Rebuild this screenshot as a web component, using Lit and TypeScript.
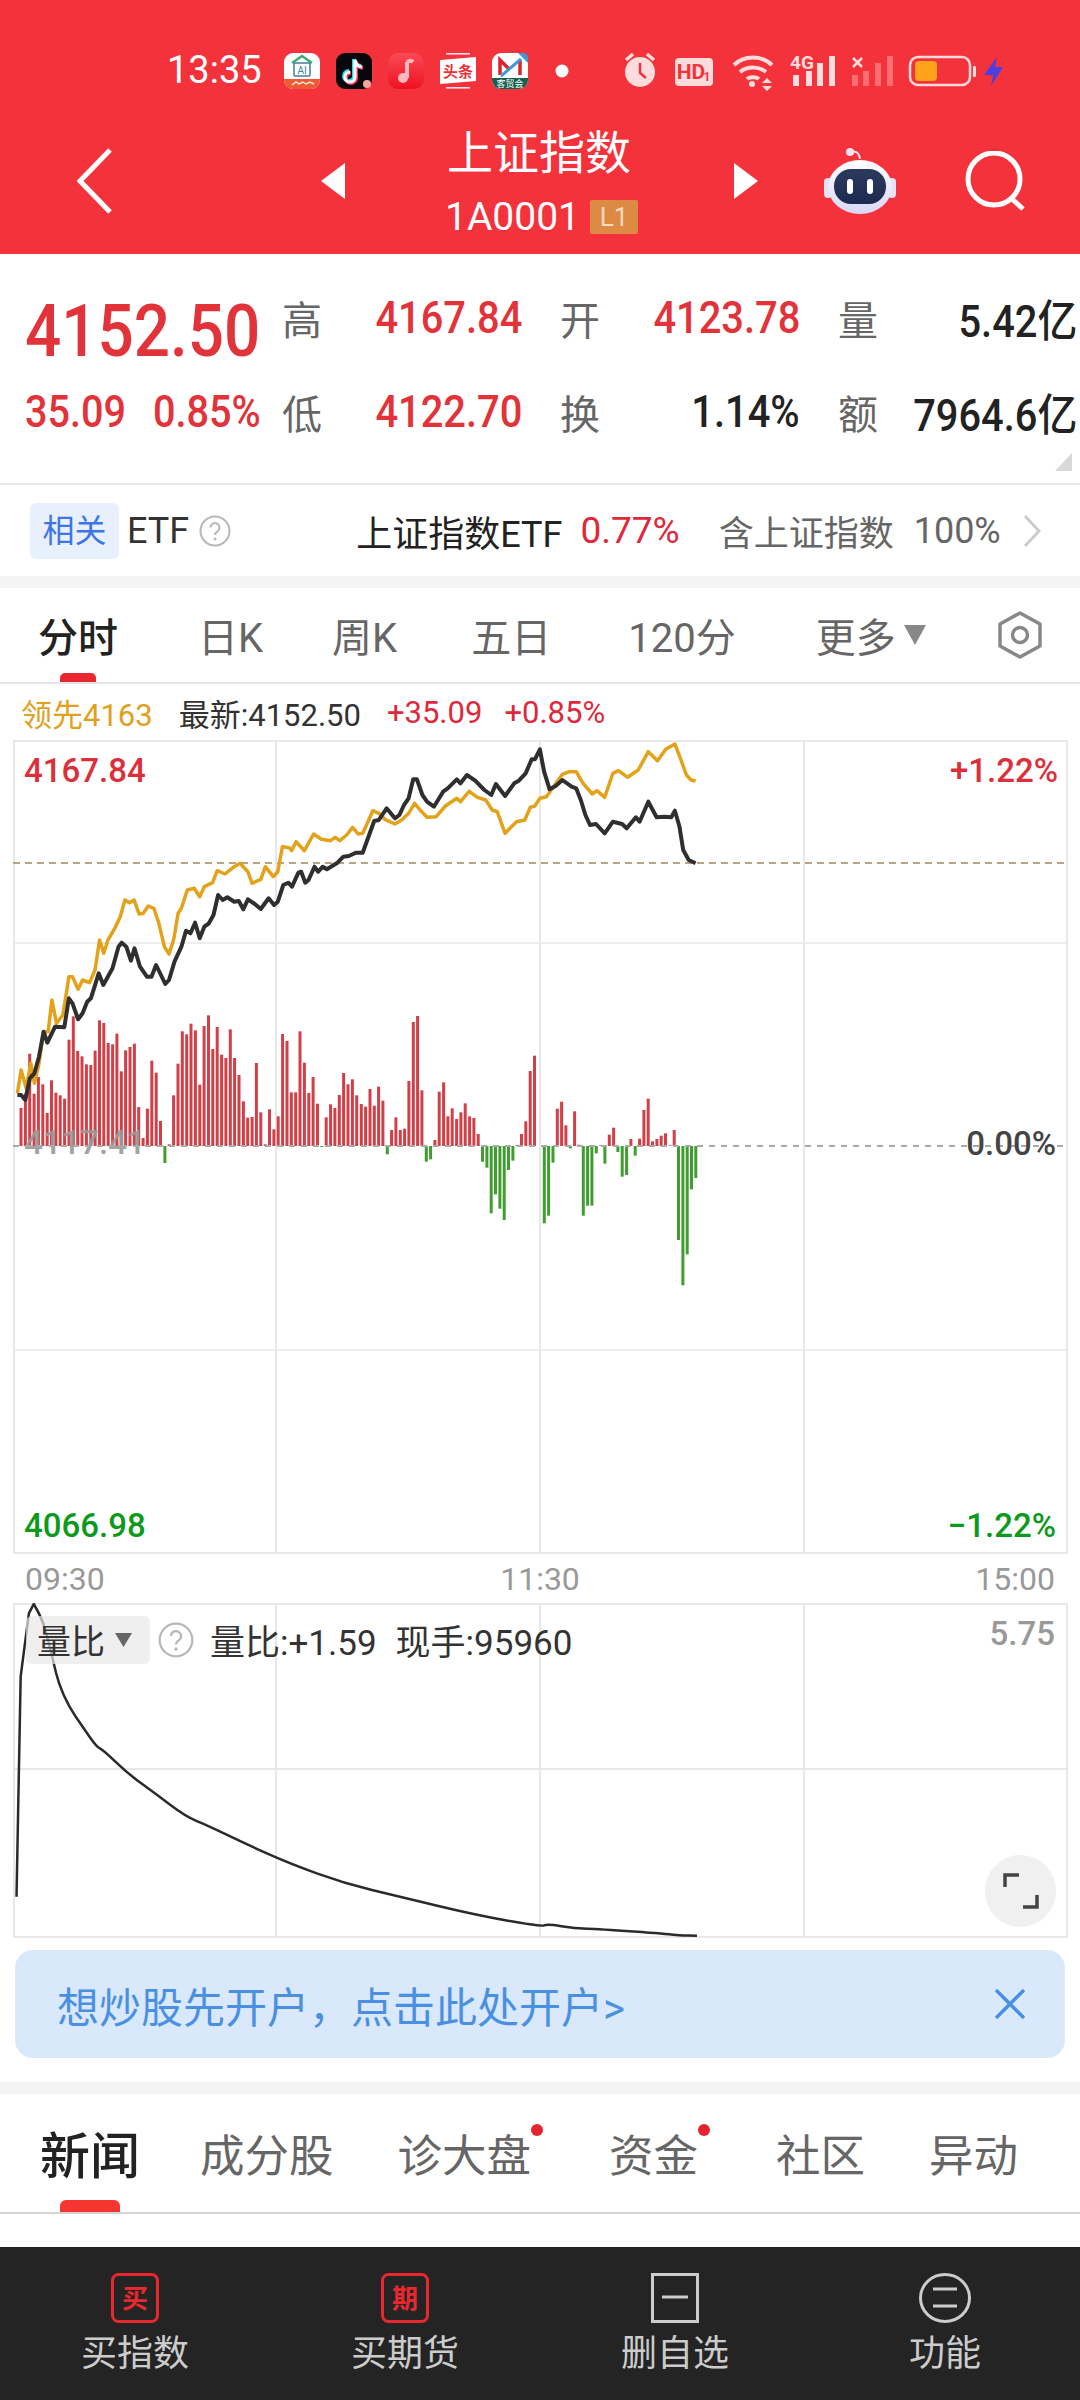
import { LitElement, html, css, svg } from 'lit';
import { customElement } from 'lit/decorators.js';

// traces were read off the zoomed reference: x is scaled by 2.178, y by 3
const toPoints = (raw: number[]) => {
  const pts: string[] = [];
  for (let i = 0; i < raw.length; i += 2) {
    pts.push(`${(raw[i] / 2.178).toFixed(1)},${(720 + raw[i + 1] / 3).toFixed(1)}`);
  }
  return pts.join(' ');
};

const BLACK_LINE = [38,1125,46,1125,55,1140,65,1075,75,1060,85,1010,95,935,103,968,120,920,140,922,150,835,158,850,170,898,180,880,190,845,198,835,215,760,225,795,245,745,258,680,265,668,275,680,285,722,293,685,305,740,320,770,330,770,340,735,360,792,368,780,380,725,395,680,405,632,415,640,425,608,435,655,445,620,455,610,465,585,475,525,485,540,495,532,510,545,520,543,530,568,540,538,555,552,568,567,585,535,597,555,605,545,617,495,628,488,636,500,650,458,656,455,665,488,672,480,685,440,693,455,703,440,712,448,735,428,748,410,760,408,775,398,790,398,800,360,815,303,825,300,842,265,860,295,870,285,880,255,890,235,900,178,908,178,920,225,930,245,945,260,965,215,975,205,995,178,1003,190,1017,165,1035,182,1055,210,1070,225,1080,192,1100,228,1120,190,1130,182,1145,160,1158,118,1165,118,1176,88,1185,155,1197,208,1210,198,1225,180,1245,200,1255,205,1265,240,1275,285,1285,315,1298,312,1317,340,1335,305,1355,312,1365,325,1385,292,1393,305,1412,245,1430,292,1448,290,1462,292,1470,272,1480,320,1488,390,1500,420,1515,430];

const GOLD_LINE = [38,1120,46,1050,57,1105,67,1030,75,1090,85,1030,95,935,105,935,113,840,123,910,137,885,150,770,158,770,170,808,180,780,195,788,207,750,217,660,226,700,235,660,250,625,262,590,272,540,282,548,292,540,303,582,312,580,323,558,335,565,345,605,358,680,368,702,378,660,388,580,395,565,408,510,423,505,435,530,445,500,463,488,473,452,490,462,510,440,523,430,540,455,549,490,568,478,578,440,595,470,605,455,615,380,630,383,635,392,645,365,663,392,683,342,700,358,720,362,730,352,740,362,755,345,768,322,780,342,790,340,800,310,812,272,825,280,838,298,860,312,875,300,890,280,903,250,915,270,930,292,950,290,970,258,995,235,1003,245,1022,214,1040,232,1058,240,1072,270,1083,275,1100,340,1125,305,1143,300,1155,262,1165,258,1176,235,1190,230,1225,163,1240,155,1255,155,1270,190,1290,222,1300,212,1317,232,1335,160,1347,152,1367,172,1390,150,1412,95,1432,122,1450,88,1470,72,1482,115,1495,165,1505,180,1515,183];

// volume ratio curve, x scaled by 1.452, y by 3, from page y 1500
const RATIO_LINE = [24,1190,30,530,35,450,42,340,49,312,60,350,70,420,78,490,85,550,100,620,120,680,140,740,150,750,185,820,225,880,270,950,300,975,355,1030,420,1090,500,1150,580,1190,690,1245,785,1280,795,1272,835,1285,870,1287,970,1302,985,1306,1012,1307];

// bar tops in zoomed pixels, baseline is the first value of each group
const BAR_GROUPS = [
  { x: 21, step: 4.36, base: 557, tops: [443,400,280,400,350,372,458,360,397,405,415,238,168,272,288,312,314,271,180,188,248,252,220,333,270,260,250,440,533,445,301,337,482,608,552,405,310,213,222,190,210,373,197,165,266,200,283,293,207,293,344,423,472,470,308,456,552,447,507,468,221,242,396,396,213,307,398,350,430,560,471,432,443,404,338,372,357,405] },
  { x: 361.3, step: 4.33, base: 318, tops: [192,200,147,197,140,182,343,270,232,270,266,123,-54,-72,151,365,358,300,155,127,229,205,237,217,190,229,234,282,365,383,520,463,506,540,390,362,315,282,244,93,47] },
  { x: 544.3, step: 4.33, base: 318, tops: [550,527,368,206,185,256,325,214,314,527,497,497,340,316,371,284,263,336,410,405,297,347,296,210,176,304,297,287,280,316,270,600,736,643,448,414] },
];

// straight up to the peak, then midpoint smoothing so the decay reads as a curve
const ratioPath = () => {
  const pts: [number, number][] = [];
  for (let i = 0; i < RATIO_LINE.length; i += 2) {
    pts.push([RATIO_LINE[i] / 1.452, 1500 + RATIO_LINE[i + 1] / 3]);
  }
  let d = `M${pts[0][0]} ${pts[0][1]}`;
  for (let i = 1; i <= 4; i++) d += `L${pts[i][0]} ${pts[i][1]}`;
  for (let i = 5; i < pts.length - 1; i++) {
    const mx = (pts[i][0] + pts[i + 1][0]) / 2;
    const my = (pts[i][1] + pts[i + 1][1]) / 2;
    d += `Q${pts[i][0]} ${pts[i][1]} ${mx} ${my}`;
  }
  const last = pts[pts.length - 1];
  return `${d}L${last[0]} ${last[1]}`;
};

@customElement('app-root')
export class AppRoot extends LitElement {
  static styles = css`
    :host {
      display: block;
      width: 1080px;
      height: 2400px;
      overflow: hidden;
      background: #fff;
      font-family: Roboto, "Noto Sans CJK SC", sans-serif;
      color: #222;
    }

    svg { display: block; }

    .top {
      height: 254px;
      background: #f4323c;
      color: #fff;
    }

    .status {
      height: 100px;
      box-sizing: border-box;
      padding: 40px 0 0 167px;
      display: flex;
      align-items: center;
    }
    .status .time { width: 95px; font-size: 38px; line-height: 60px; white-space: nowrap; }
    .status .apps { margin-left: 8px; }
    .status .sys { margin-left: 40px; }

    .nav {
      height: 154px;
      display: grid;
      grid-template-columns: 445px auto 1fr;
      align-items: center;
    }
    .nav-left, .nav-right { display: flex; align-items: center; padding-top: 8px; }
    .nav-left { justify-content: space-between; padding-left: 77px; padding-right: 100px; }
    .nav-right { padding-left: 96px; }
    .robot { margin-left: 66px; }
    .search { margin-left: 69px; }
    .title { display: flex; flex-direction: column; align-items: flex-start; align-self: start; margin-top: 22px; }
    .title .name { font-size: 46px; line-height: 62px; padding-left: 2px; }
    .title .code { display: flex; align-items: center; gap: 10px; font-size: 39px; line-height: 44px; margin-top: 11px; }
    .badge {
      width: 48px;
      height: 34px;
      background: #dc8a44;
      border-radius: 2px;
      font-size: 26px;
      line-height: 34px;
      text-align: center;
      color: #f6dcc2;
    }

    .quote {
      position: relative;
      height: 231px;
      box-sizing: border-box;
      padding: 34px 3px 0 25px;
      border-bottom: 2px solid #e8e8e8;
      display: grid;
      grid-template-columns: 257px 240px 278px 277px;
      row-gap: 34px;
      grid-auto-rows: 60px;
    }
    .quote .cell { display: flex; align-items: center; justify-content: space-between; white-space: nowrap; }
    .quote .cell.wide { margin-left: 38px; }
    .quote .label { font-size: 40px; color: #666; }
    .quote .val { font-size: 44px; font-weight: 500; transform: scaleX(0.905); transform-origin: right center; }
    .quote .up { color: #e2323a; }
    .price {
      font-size: 72px;
      font-weight: 500;
      color: #e2323a;
      line-height: 60px;
      margin-top: 28px;
      transform: scaleX(0.886);
      transform-origin: left center;
    }
    .change { display: flex; justify-content: space-between; width: 236px; font-size: 44px; font-weight: 500; color: #e2323a; }
    .change span { transform: scaleX(0.9); transform-origin: left center; }
    .change span:last-child { transform-origin: right center; }
    .corner { position: absolute; right: 8px; bottom: 12px; }

    .etf {
      height: 91px;
      display: flex;
      align-items: center;
      font-size: 36px;
      white-space: nowrap;
    }
    .etf .tag {
      margin-left: 30px;
      width: 89px;
      height: 56px;
      background: #e8f0fd;
      border-radius: 6px;
      color: #3d76e8;
      font-size: 32px;
      line-height: 56px;
      text-align: center;
    }
    .etf .name { margin-left: 8px; color: #333; }
    .etf .help { margin-left: 10px; }
    .etf .fund { margin-left: 125px; color: #222; }
    .etf .pct { margin-left: 18px; color: #e0283c; font-size: 37px; }
    .etf .holds { margin-left: 39px; color: #666; font-size: 35px; }
    .etf .weight { margin-left: 20px; color: #666; }
    .etf .chev { margin-left: 22px; }

    .gap { height: 12px; background: #f4f4f4; }

    .tabs {
      position: relative;
      height: 96px;
      box-sizing: border-box;
      border-bottom: 2px solid #e6e6e6;
      padding: 0 36px 0 38px;
      display: flex;
      align-items: center;
      font-size: 40px;
      color: #666;
      white-space: nowrap;
    }
    .tabs .on { color: #222; font-weight: 500; }
    .tabs span:nth-child(2) { margin-left: 80px; }
    .tabs span:nth-child(3) { margin-left: 69px; }
    .tabs span:nth-child(4) { margin-left: 74px; }
    .tabs span:nth-child(5) { margin-left: 77px; }
    .tabs .more { margin-left: 80px; display: flex; align-items: center; gap: 8px; }
    .tabs .hex { margin-left: auto; }
    .tabs .pill {
      position: absolute;
      left: 60px;
      bottom: 0;
      width: 36px;
      height: 9px;
      border-radius: 5px 5px 0 0;
      background: #e8282e;
    }

    .legend {
      height: 56px;
      display: flex;
      align-items: center;
      padding-left: 21px;
      font-size: 31px;
      white-space: nowrap;
    }
    .legend .lead { color: #e0a020; }
    .legend .last { margin-left: 26px; color: #333; }
    .legend .rise { margin-left: 26px; color: #e0283c; }
    .legend .rise:last-child { margin-left: 22px; }

    .chart-text { font-family: Roboto, "Noto Sans CJK SC", sans-serif; font-size: 33px; font-weight: 500; }

    .times {
      height: 49px;
      display: flex;
      align-items: center;
      justify-content: space-between;
      padding: 0 25px;
      font-size: 32px;
      color: #999;
    }

    .sub { position: relative; height: 335px; }
    .sub .head {
      position: absolute;
      left: 26px;
      top: 11px;
      display: flex;
      align-items: center;
      font-size: 34px;
      color: #333;
      white-space: nowrap;
    }
    .sub .drop {
      width: 124px;
      height: 48px;
      box-sizing: border-box;
      padding-left: 11px;
      display: flex;
      align-items: center;
      gap: 10px;
      background: rgba(232, 232, 232, 0.7);
      border-radius: 6px;
    }
    .sub .help { margin-left: 8px; }
    .sub .info { margin-left: 16px; font-size: 35px; }
    .sub .now { margin-left: 19px; font-size: 35px; }
    .sub .expand {
      position: absolute;
      left: 985px;
      top: 252px;
      width: 71px;
      height: 72px;
      border-radius: 50%;
      background: #f0f0f0;
      display: flex;
      align-items: center;
      justify-content: center;
    }

    .banner {
      margin: 12px 15px 24px;
      height: 108px;
      box-sizing: border-box;
      padding: 0 39px 0 42px;
      display: flex;
      align-items: center;
      justify-content: space-between;
      background: #d9e8fb;
      border-radius: 18px;
      color: #4a90e2;
      font-size: 42px;
      white-space: nowrap;
    }

    .news {
      position: relative;
      height: 120px;
      box-sizing: border-box;
      border-bottom: 2px solid #d4d4d4;
      padding: 0 0 2px 40px;
      display: flex;
      align-items: center;
      font-size: 44.5px;
      color: #666;
      white-space: nowrap;
    }
    .news .on { font-size: 50px; font-weight: 500; color: #222; }
    .news span:nth-child(2) { margin-left: 60px; }
    .news span:nth-child(3) { margin-left: 64px; }
    .news span:nth-child(4) { margin-left: 78px; }
    .news span:nth-child(5) { margin-left: 78px; }
    .news span:nth-child(6) { margin-left: 64px; }
    .news .dotted { position: relative; }
    .news .dotted::after {
      content: "";
      position: absolute;
      right: -12px;
      top: 4px;
      width: 12px;
      height: 12px;
      border-radius: 50%;
      background: #e4262c;
    }
    .news .pill {
      position: absolute;
      left: 60px;
      bottom: 0;
      width: 60px;
      height: 12px;
      border-radius: 6px 6px 0 0;
      background: #f5352f;
    }

    .bottom {
      margin-top: 33px;
      height: 153px;
      background: #242424;
      display: flex;
      color: #ccc;
    }
    .bottom .item {
      flex: 1;
      padding-top: 26px;
      display: flex;
      flex-direction: column;
      align-items: center;
      gap: 11px;
      font-size: 36px;
      line-height: 40px;
    }
  `;

  private helpIcon(size: number) {
    return html`<svg class="help" width=${size} height=${size} viewBox="0 0 32 32">
      <circle cx="16" cy="16" r="14.5" fill="none" stroke="#b8b8b8" stroke-width="2"/>
      <path d="M11.5 12.5a4.5 4.5 0 1 1 7 3.8c-1.6 1-2.5 1.9-2.5 3.7" fill="none" stroke="#b8b8b8" stroke-width="2"/>
      <circle cx="16" cy="24" r="1.5" fill="#b8b8b8"/>
    </svg>`;
  }

  private renderApps() {
    return html`<svg class="apps" width="300" height="60" viewBox="270 40 300 60">
      <defs>
        <linearGradient id="music" x1="0" y1="0" x2="0" y2="1">
          <stop offset="0" stop-color="#fb4a55"/><stop offset="1" stop-color="#ee1122"/>
        </linearGradient>
      </defs>
      <rect x="284" y="53" width="36" height="36" rx="9" fill="#fff"/>
      <path d="M284 79h36v1a9 9 0 0 1-9 9h-18a9 9 0 0 1-9-9z" fill="#ef5a34"/>
      <path d="M292 63l10-7 10 7" fill="none" stroke="#3fa96f" stroke-width="2.5"/>
      <rect x="294" y="63" width="16" height="13" rx="1" fill="none" stroke="#3d7f9e" stroke-width="1.5"/>
      <text x="302" y="74" font-size="10" fill="#3d7f9e" text-anchor="middle" font-family="Roboto">AI</text>
      <path d="M292 85l4-3 3 2 4-2 3 2 4-2 4 2" fill="none" stroke="#fde8d8" stroke-width="1.5"/>

      <rect x="336" y="53" width="36" height="36" rx="9" fill="#08080c"/>
      <path d="M355 60v17a5 5 0 1 1-5-5M355 60c.5 4 3 6.5 7 7" fill="none" stroke="#25e0e4" stroke-width="4" transform="translate(-1 -1)"/>
      <path d="M355 60v17a5 5 0 1 1-5-5M355 60c.5 4 3 6.5 7 7" fill="none" stroke="#f5305a" stroke-width="4" transform="translate(1 1)"/>
      <path d="M355 60v17a5 5 0 1 1-5-5M355 60c.5 4 3 6.5 7 7" fill="none" stroke="#fff" stroke-width="3.2"/>
      <circle cx="367" cy="84" r="4" fill="#f3a9a0"/>

      <rect x="388" y="53" width="36" height="36" rx="10" fill="url(#music)"/>
      <path d="M407 62v16" stroke="#ffb9bd" stroke-width="4"/>
      <path d="M407 62c3-2 5-1 6 0" fill="none" stroke="#ffb9bd" stroke-width="4"/>
      <circle cx="403" cy="78" r="5" fill="#ffb9bd"/>

      <rect x="440" y="53" width="36" height="36" rx="6" fill="#f4323c"/>
      <rect x="446" y="53" width="24" height="1.6" fill="#fde"/>
      <rect x="446" y="87" width="24" height="1.6" fill="#fde"/>
      <path d="M440 60l36-3v24l-36 3z" fill="#fff"/>
      <text x="458" y="77" font-size="15" font-weight="700" fill="#e8323a" text-anchor="middle" font-family="Noto Sans CJK SC">头条</text>

      <rect x="492" y="53" width="36" height="36" rx="9" fill="#fff"/>
      <path d="M492 78h36v2a9 9 0 0 1-9 9h-18a9 9 0 0 1-9-9z" fill="#17604c"/>
      <path d="M500 75V60l9 9" fill="none" stroke="#d9232e" stroke-width="3.5"/>
      <path d="M520 75V60" fill="none" stroke="#d9232e" stroke-width="3.5"/>
      <path d="M501 76l20-17" stroke="#3d9ad6" stroke-width="3"/>
      <path d="M518 53h5a5 5 0 0 1 5 5v5z" fill="#3d9ad6"/>
      <text x="510" y="87" font-size="9" fill="#fff" text-anchor="middle" font-family="Noto Sans CJK SC">客贸会</text>

      <circle cx="562" cy="71" r="6.5" fill="#fff"/>
    </svg>`;
  }

  private renderSys() {
    const soft = '#ffdcdc';
    return html`<svg class="sys" width="410" height="60" viewBox="610 40 410 60">
      <circle cx="640" cy="72" r="15" fill=${soft}/>
      <path d="M640 63v10l6 5" fill="none" stroke="#f4323c" stroke-width="2.5"/>
      <path d="M626 60l7-6M654 60l-7-6" stroke=${soft} stroke-width="3.5"/>

      <rect x="675" y="58" width="38" height="28" rx="4" fill=${soft}/>
      <text x="691" y="79" font-size="21" font-weight="700" fill="#f4323c" text-anchor="middle" font-family="Roboto">HD</text>
      <text x="707" y="81" font-size="12" font-weight="700" fill="#f4323c" text-anchor="middle" font-family="Roboto">1</text>

      <path d="M734 65c10-10 28-10 38 0M740 72c7-6 19-6 26 0M747 79c3-2.500 9-2.500 12 0" fill="none" stroke=${soft} stroke-width="4"/>
      <circle cx="752" cy="84" r="3" fill=${soft}/>
      <path d="M767 78l-5 5h10zM767 91l-5-5h10z" fill=${soft}/>

      <text x="802" y="69" font-size="19" font-weight="700" fill=${soft} text-anchor="middle" font-family="Roboto">4G</text>
      <rect x="793" y="75" width="6" height="11" fill=${soft}/>
      <rect x="806" y="71" width="6" height="15" fill=${soft}/>
      <rect x="817" y="63" width="6" height="23" fill=${soft}/>
      <rect x="829" y="56" width="6" height="30" fill=${soft}/>

      <path d="M853 58l9 9M862 58l-9 9" stroke=${soft} stroke-width="2.500"/>
      <g fill="#ff8a8a" opacity="0.7">
        <rect x="852" y="75" width="6" height="11"/>
        <rect x="863" y="71" width="6" height="15"/>
        <rect x="875" y="63" width="6" height="23"/>
        <rect x="887" y="56" width="6" height="30"/>
      </g>

      <rect x="910" y="57" width="60" height="28" rx="8" fill="none" stroke=${soft} stroke-width="2.500"/>
      <rect x="973" y="66" width="3" height="11" rx="1" fill=${soft}/>
      <rect x="915" y="61" width="22" height="20" rx="4" fill="#ffa41a"/>

      <path d="M997 57l-13 18h9l-2 11 12-19h-8z" fill="#4a3fe0"/>
    </svg>`;
  }

  private renderRobot() {
    return html`<svg class="robot" width="72" height="66" viewBox="825 146 72 66">
      <defs>
        <linearGradient id="shell" x1="0" y1="0" x2="0" y2="1">
          <stop offset="0" stop-color="#ffffff"/><stop offset="1" stop-color="#d8d8f6"/>
        </linearGradient>
        <linearGradient id="face" x1="0" y1="0" x2="0" y2="1">
          <stop offset="0" stop-color="#2b3a5c"/><stop offset="1" stop-color="#1d2a52"/>
        </linearGradient>
      </defs>
      <path d="M851 150c4-1 9-1 10 7" fill="none" stroke="#f0e8f0" stroke-width="2"/>
      <circle cx="851" cy="150" r="4" fill="#f3e6ee"/>
      <rect x="825" y="176" width="8" height="20" rx="4" fill="#e6e2f6"/>
      <rect x="889" y="176" width="8" height="20" rx="4" fill="#e6e2f6"/>
      <ellipse cx="861" cy="185" rx="32" ry="27" fill="url(#shell)"/>
      <rect x="835" y="167" width="52" height="35" rx="17" fill="url(#face)"/>
      <rect x="848" y="177" width="6" height="15" rx="3" fill="#fff"/>
      <rect x="868" y="177" width="6" height="15" rx="3" fill="#fff"/>
    </svg>`;
  }

  private renderChart() {
    const grid = '#e8e8e8';
    const bars = BAR_GROUPS.flatMap((g) =>
      g.tops.map((top, i) => {
        const h = (g.base - top) / 3;
        const x = (g.x + i * g.step - 1.5).toFixed(1);
        return h >= 0
          ? svg`<rect x=${x} y=${1146 - h} width="3" height=${h} fill="#d33f46"/>`
          : svg`<rect x=${x} y="1146" width="3" height=${-h} fill="#3f9e2f"/>`;
      })
    );
    return html`<svg width="1080" height="814" viewBox="0 740 1080 814">
      <g stroke=${grid} stroke-width="2" fill="none">
        <rect x="14" y="741" width="1053" height="812"/>
        <path d="M276 740V1553M540 740V1553M804 740V1553"/>
        <path d="M13 943H1067M13 1350H1067" stroke-width="1.500"/>
      </g>
      ${bars}
      <text class="chart-text" x="24" y="1154" fill="#9a9a9a" font-size="33" opacity="0.9">4117.41</text>
      <path d="M13 1146H1067" stroke="#aaa" stroke-width="2" stroke-dasharray="6 6" fill="none"/>
      <path d="M13 863H1067" stroke="#b9a385" stroke-width="2" stroke-dasharray="7 5" fill="none"/>
      <polyline points=${toPoints(GOLD_LINE)} fill="none" stroke="#e3a21a" stroke-width="3.500" stroke-linejoin="round"/>
      <polyline points=${toPoints(BLACK_LINE)} fill="none" stroke="#2f2f2f" stroke-width="4" stroke-linejoin="round"/>
      <text class="chart-text" x="24" y="782" fill="#dd2f3a">4167.84</text>
      <text class="chart-text" x="1058" y="782" fill="#dd2f3a" text-anchor="end">+1.22%</text>
      <text class="chart-text" x="1056" y="1155" fill="#444" text-anchor="end">0.00%</text>
      <text class="chart-text" x="24" y="1537" fill="#0c9a1c">4066.98</text>
      <text class="chart-text" x="1056" y="1537" fill="#0c9a1c" text-anchor="end">−1.22%</text>
    </svg>`;
  }

  private renderSub() {
    return html`<div class="sub">
      <svg width="1080" height="335" viewBox="0 1603 1080 335">
        <g stroke="#e8e8e8" stroke-width="2" fill="none">
          <rect x="14" y="1604" width="1053" height="333"/>
          <path d="M276 1603V1937M540 1603V1937M804 1603V1937M13 1769H1067"/>
        </g>
        <path d=${ratioPath()} fill="none" stroke="#2a2a2a" stroke-width="2.500" stroke-linejoin="round"/>
        <text class="chart-text" x="1055" y="1645" fill="#999" text-anchor="end" font-weight="400">5.75</text>
      </svg>
      <div class="head">
        <div class="drop">量比<svg width="17" height="14" viewBox="0 0 17 14"><path d="M0 0h17l-8.500 14z" fill="#666"/></svg></div>
        ${this.helpIcon(36)}
        <span class="info">量比:+1.59</span>
        <span class="now">现手:95960</span>
      </div>
      <div class="expand">
        <svg width="36" height="36" viewBox="0 0 36 36">
          <path d="M2 14V2H16M34 22V34H20" fill="none" stroke="#444" stroke-width="3.500"/>
        </svg>
      </div>
    </div>`;
  }

  render() {
    return html`
      <div class="top">
        <div class="status">
          <span class="time">13:35</span>
          ${this.renderApps()}
          ${this.renderSys()}
        </div>
        <div class="nav">
          <div class="nav-left">
            <svg width="36" height="66" viewBox="0 0 36 66"><path d="M33 2L3 33L33 64" fill="none" stroke="#fff" stroke-width="5"/></svg>
            <svg width="24" height="36" viewBox="0 0 24 36"><path d="M24 0V36L0 18z" fill="#fff"/></svg>
          </div>
          <div class="title">
            <span class="name">上证指数</span>
            <span class="code">1A0001<span class="badge">L1</span></span>
          </div>
          <div class="nav-right">
            <svg width="24" height="36" viewBox="0 0 24 36"><path d="M0 0V36L24 18z" fill="#fff"/></svg>
            ${this.renderRobot()}
            <svg class="search" width="60" height="60" viewBox="0 0 60 60">
              <circle cx="29" cy="28" r="26" fill="none" stroke="#fff" stroke-width="5"/>
              <path d="M47 48L58 58" stroke="#fff" stroke-width="5"/>
            </svg>
          </div>
        </div>
      </div>

      <div class="quote">
        <div class="cell"><span class="price">4152.50</span></div>
        <div class="cell"><span class="label">高</span><span class="val up">4167.84</span></div>
        <div class="cell wide"><span class="label">开</span><span class="val up">4123.78</span></div>
        <div class="cell wide"><span class="label">量</span><span class="val">5.42亿</span></div>
        <div class="cell"><span class="change"><span>35.09</span><span>0.85%</span></span></div>
        <div class="cell"><span class="label">低</span><span class="val up">4122.70</span></div>
        <div class="cell wide"><span class="label">换</span><span class="val">1.14%</span></div>
        <div class="cell wide"><span class="label">额</span><span class="val">7964.6亿</span></div>
        <svg class="corner" width="17" height="18" viewBox="0 0 17 18"><path d="M17 0V18H0z" fill="#d8d8d8"/></svg>
      </div>

      <div class="etf">
        <span class="tag">相关</span>
        <span class="name">ETF</span>
        ${this.helpIcon(32)}
        <span class="fund">上证指数ETF</span>
        <span class="pct">0.77%</span>
        <span class="holds">含上证指数</span>
        <span class="weight">100%</span>
        <svg class="chev" width="18" height="32" viewBox="0 0 18 32"><path d="M2 1L16 16L2 31" fill="none" stroke="#ccc" stroke-width="3"/></svg>
      </div>
      <div class="gap"></div>

      <div class="tabs">
        <span class="on">分时</span>
        <span>日K</span>
        <span>周K</span>
        <span>五日</span>
        <span>120分</span>
        <div class="more">更多<svg width="22" height="20" viewBox="0 0 22 20"><path d="M0 0h22l-11 20z" fill="#888"/></svg></div>
        <svg class="hex" width="48" height="48" viewBox="0 0 48 48">
          <path d="M24 2L44 13V35L24 46L4 35V13z" fill="none" stroke="#888" stroke-width="3.500" stroke-linejoin="round"/>
          <circle cx="24" cy="24" r="7.500" fill="none" stroke="#888" stroke-width="3.500"/>
        </svg>
        <i class="pill"></i>
      </div>

      <div class="legend">
        <span class="lead">领先4163</span>
        <span class="last">最新:4152.50</span>
        <span class="rise">+35.09</span>
        <span class="rise">+0.85%</span>
      </div>

      ${this.renderChart()}

      <div class="times"><span>09:30</span><span>11:30</span><span>15:00</span></div>

      ${this.renderSub()}

      <div class="banner">
        <span>想炒股先开户，点击此处开户&gt;</span>
        <svg width="32" height="30" viewBox="0 0 32 30"><path d="M2 1L30 29M30 1L2 29" fill="none" stroke="#4a90e2" stroke-width="3.500"/></svg>
      </div>
      <div class="gap"></div>

      <div class="news">
        <span class="on">新闻</span>
        <span>成分股</span>
        <span class="dotted">诊大盘</span>
        <span class="dotted">资金</span>
        <span>社区</span>
        <span>异动</span>
        <i class="pill"></i>
      </div>

      <div class="bottom">
        <div class="item">
          <svg width="48" height="50" viewBox="0 0 48 50">
            <rect x="1.500" y="1.500" width="45" height="47" rx="6" fill="none" stroke="#e8282e" stroke-width="3"/>
            <text x="24" y="35" font-size="26" font-weight="700" fill="#e8282e" text-anchor="middle" font-family="Noto Sans CJK SC">买</text>
          </svg>
          <span>买指数</span>
        </div>
        <div class="item">
          <svg width="48" height="50" viewBox="0 0 48 50">
            <rect x="1.500" y="1.500" width="45" height="47" rx="6" fill="none" stroke="#e8282e" stroke-width="3"/>
            <text x="24" y="35" font-size="26" font-weight="700" fill="#e8282e" text-anchor="middle" font-family="Noto Sans CJK SC">期</text>
          </svg>
          <span>买期货</span>
        </div>
        <div class="item">
          <svg width="48" height="50" viewBox="0 0 48 50">
            <rect x="1.500" y="1.500" width="45" height="47" fill="none" stroke="#ccc" stroke-width="3"/>
            <path d="M11 24H37" stroke="#ccc" stroke-width="3"/>
          </svg>
          <span>删自选</span>
        </div>
        <div class="item">
          <svg width="52" height="50" viewBox="0 0 52 50">
            <ellipse cx="26" cy="25" rx="24.500" ry="23.500" fill="none" stroke="#ccc" stroke-width="3"/>
            <path d="M14 16H38M14 33H38" stroke="#ccc" stroke-width="3"/>
          </svg>
          <span>功能</span>
        </div>
      </div>
    `;
  }
}
